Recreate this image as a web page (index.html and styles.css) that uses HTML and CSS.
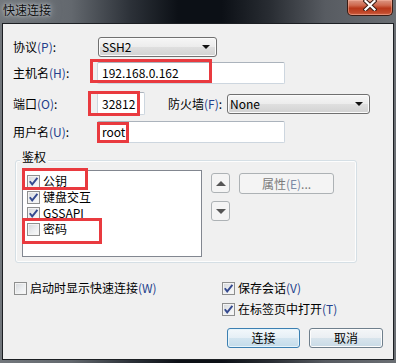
FILE: index.html
```html
<!DOCTYPE html>
<html>
<head>
<meta charset="utf-8">
<title>快速连接</title>
<link rel="stylesheet" href="styles.css">
</head>
<body>
<div class="window">
  <div class="titlebar">
    <span class="title">快速连接</span>
    <div class="close">
      <svg width="14" height="11" viewBox="0 0 14 11">
        <path d="M2.5 1 L11.5 9.5 M11.5 1 L2.5 9.5" stroke="#3b1d14" stroke-width="4.2" stroke-linecap="square"/>
        <path d="M2.5 1 L11.5 9.5 M11.5 1 L2.5 9.5" stroke="#ffffff" stroke-width="2.2" stroke-linecap="square"/>
      </svg>
    </div>
  </div>
  <div class="client">
    <div class="row r1">
      <span class="lbl">协议<span class="acc">(P)</span>:</span>
      <div class="combo proto"><span>SSH2</span><i class="arrow"></i></div>
    </div>
    <div class="row r2">
      <span class="lbl">主机名<span class="acc">(H)</span>:</span>
      <div class="edit host">192.168.0.162</div>
    </div>
    <div class="row r3">
      <span class="lbl">端口<span class="acc">(O)</span>:</span>
      <div class="edit port">32812</div>
      <span class="lbl2">防火墙<span class="acc">(F)</span>:</span>
      <div class="combo fw"><span>None</span><i class="arrow"></i></div>
    </div>
    <div class="row r4">
      <span class="lbl">用户名<span class="acc">(U)</span>:</span>
      <div class="edit user">root</div>
    </div>

    <div class="group">
      <span class="legend">鉴权</span>
      <div class="listbox">
        <div class="item"><span class="cb on"><svg width="11" height="11" viewBox="0 0 11 11"><path d="M1.8 5.2 L4.2 8.4 L9.4 1.8" fill="none" stroke="#34498f" stroke-width="1.9"/></svg></span><span>公钥</span></div>
        <div class="item"><span class="cb on"><svg width="11" height="11" viewBox="0 0 11 11"><path d="M1.8 5.2 L4.2 8.4 L9.4 1.8" fill="none" stroke="#34498f" stroke-width="1.9"/></svg></span><span>键盘交互</span></div>
        <div class="item"><span class="cb on"><svg width="11" height="11" viewBox="0 0 11 11"><path d="M1.8 5.2 L4.2 8.4 L9.4 1.8" fill="none" stroke="#34498f" stroke-width="1.9"/></svg></span><span class="latin">GSSAPI</span></div>
        <div class="item"><span class="cb"></span><span>密码</span></div>
      </div>
      <div class="sidebtns">
        <div class="btn dis sq"><i class="tri up"></i></div>
        <div class="btn dis sq"><i class="tri down"></i></div>
      </div>
      <div class="btn dis props">属性<span class="acc dim">(E)</span>...</div>
    </div>

    <div class="bottom">
      <div class="bleft">
        <div class="check"><span class="cb"></span><span>启动时显示快速连接<span class="acc">(W)</span></span></div>
      </div>
      <div class="bright">
        <div class="check"><span class="cb on"><svg width="11" height="11" viewBox="0 0 11 11"><path d="M1.8 5.2 L4.2 8.4 L9.4 1.8" fill="none" stroke="#34498f" stroke-width="1.9"/></svg></span><span>保存会话<span class="acc">(V)</span></span></div>
        <div class="check c2"><span class="cb on"><svg width="11" height="11" viewBox="0 0 11 11"><path d="M1.8 5.2 L4.2 8.4 L9.4 1.8" fill="none" stroke="#34498f" stroke-width="1.9"/></svg></span><span>在标签页中打开<span class="acc">(T)</span></span></div>
        <div class="btnrow">
          <div class="btn main">连接</div>
          <div class="btn cancel">取消</div>
        </div>
      </div>
    </div>
  </div>

  <div class="mark m-host"></div>
  <div class="mark m-port"></div>
  <div class="mark m-user"></div>
  <div class="mark m-pub"></div>
  <div class="mark m-pwd"></div>
</div>
</body>
</html>
```
FILE: styles.css
```css
* { box-sizing: border-box; }
html, body { margin: 0; padding: 0; }
body {
  width: 396px;
  height: 363px;
  overflow: hidden;
  font: 12px/16px "Noto Sans CJK SC", "Noto Sans", sans-serif;
  color: #000;
  background: #555;
}
.window {
  position: relative;
  width: 396px;
  height: 363px;
  display: flex;
  flex-direction: column;
  background: linear-gradient(90deg, #72777c 0%, #63686e 18%, #2c3138 33%, #0c1016 45%, #0c1016 56%, #282c32 68%, #575b61 82%, #6a6e73 100%);
}
.titlebar {
  height: 23px;
  display: flex;
  justify-content: space-between;
  align-items: flex-start;
  padding-left: 3px;
}
.title {
  margin-top: 2px;
  color: #0e0e0e;
  text-shadow: 0 0 3px rgba(220,225,230,.9), 0 0 7px rgba(190,195,200,.8), 0 0 12px rgba(170,175,180,.7);
}
.close {
  width: 46px;
  height: 16px;
  margin-right: 3px;
  border: 1px solid #3a1c14;
  border-top: none;
  border-radius: 0 0 5px 5px;
  background: linear-gradient(#dc9784 0%, #cf6a50 35%, #b8381a 55%, #c24a2c 85%, #d06a4c 100%);
  box-shadow: inset 0 0 0 1px rgba(255,190,170,.45);
  display: flex;
  justify-content: center;
  align-items: flex-start;
}
.client {
  flex: 1;
  margin: 0 2px 3px 2px;
  border: 1px solid #1c1f23;
  background: #f0f0f0;
  padding-top: 13px;
  display: flex;
  flex-direction: column;
  align-items: flex-start;
}
.row {
  display: flex;
  align-items: center;
  padding-left: 10px;
}
.r1 { height: 20px; }
.r2 { height: 22px; margin-top: 5px; }
.r3 { height: 23px; margin-top: 8px; }
.r4 { height: 22px; margin-top: 6px; }
.lbl { width: 84px; white-space: nowrap; }
.lbl2 { width: 59px; margin-left: 23px; white-space: nowrap; }
.acc { color: #243f8c; }
.acc.dim { color: #7d8aa6; }

.combo {
  height: 20px;
  display: flex;
  align-items: center;
  justify-content: space-between;
  padding: 0 6px 0 3px;
  border: 1px solid #707070;
  border-radius: 3px;
  background: linear-gradient(#f6f6f6 0%, #ececec 50%, #dfdfdf 51%, #d2d2d2 100%);
  box-shadow: inset 0 0 0 1px #fbfbfb;
  font-family: "Noto Sans CJK SC", sans-serif;
}
.combo.proto { width: 119px; margin-left: 1px; }
.combo.fw { width: 143px; padding-left: 2px; }
.arrow {
  width: 0;
  height: 0;
  border-left: 4px solid transparent;
  border-right: 4px solid transparent;
  border-top: 4px solid #111;
}
.edit {
  height: 100%;
  display: flex;
  align-items: center;
  padding-left: 4px;
  background: #fff;
  border: 1px solid #cdd6df;
  border-top-color: #abb3bc;
  border-radius: 2px;
}
.edit.host, .edit.user { width: 188px; }
.edit.port { width: 48px; }

.group {
  position: relative;
  margin: 17px 0 0 12px;
  width: 342px;
  height: 103px;
  border: 1px solid #d5dfe5;
  border-radius: 3px;
  box-shadow: inset 0 0 0 1px #fdfdfd;
  padding: 9px 0 0 6px;
  display: flex;
  align-items: flex-start;
}
.legend {
  position: absolute;
  top: -12px;
  left: 4px;
  padding: 0 2px;
  background: #f0f0f0;
}
.listbox {
  width: 180px;
  height: 87px;
  border: 1px solid #828790;
  background: #fff;
  padding: 2px 0 0 4px;
}
.item {
  height: 16px;
  display: flex;
  align-items: center;
  gap: 3px;
}
.cb {
  width: 13px;
  height: 13px;
  flex: none;
  border: 1px solid #8e8f8f;
  background: linear-gradient(135deg, #d3d6da 0%, #eceef0 55%, #fbfbfb 100%);
  box-shadow: inset 0 0 0 1px #f3f3f3;
  display: flex;
  align-items: center;
  justify-content: center;
}
.cb svg { display: block; }
.sidebtns {
  display: flex;
  flex-direction: column;
  gap: 8px;
  margin: 3px 0 0 9px;
}
.btn {
  display: flex;
  align-items: center;
  justify-content: center;
  border: 1px solid #707070;
  border-radius: 3px;
  background: linear-gradient(#f2f2f2 0%, #ebebeb 50%, #dddddd 51%, #cfcfcf 100%);
  box-shadow: inset 0 0 0 1px #fcfcfc;
}
.btn.dis {
  border-color: #adb2b5;
  background: #f4f4f4;
  box-shadow: none;
  color: #7a7a7a;
}
.btn.sq { width: 19px; height: 20px; }
.tri {
  width: 0;
  height: 0;
  border-left: 5px solid transparent;
  border-right: 5px solid transparent;
}
.tri.up { border-bottom: 5px solid #555; }
.tri.down { border-top: 5px solid #555; }
.btn.props {
  width: 95px;
  height: 21px;
  margin: 3px 0 0 9px;
}

.bottom {
  display: flex;
  margin-top: 17px;
}
.bleft { width: 208px; margin-left: 11px; }
.bright { display: flex; flex-direction: column; }
.check {
  height: 16px;
  display: flex;
  align-items: center;
  gap: 3px;
  white-space: nowrap;
}
.check.c2 { margin-top: 5px; }
.btnrow {
  display: flex;
  margin: 11px 0 0 5px;
  gap: 9px;
}
.btn.main, .btn.cancel { height: 20px; }
.btn.main {
  width: 73px;
  border-color: #3c7fb1;
  background: linear-gradient(#f3f8fb 0%, #e5eff6 50%, #d3e5f0 51%, #c3dbea 100%);
  box-shadow: inset 0 0 0 1px #e6f4fb;
}
.btn.cancel {
  width: 74px;
  border-color: #6f7f8c;
  background: linear-gradient(#f4f6f8 0%, #eaeef2 50%, #d8e4ec 51%, #c8dae6 100%);
}

.mark {
  position: absolute;
  border: 3px solid #e93a3f;
}
.m-host { left: 90px; top: 59px; width: 122px; height: 24px; }
.m-port { left: 88px; top: 91px; width: 52px; height: 25px; }
.m-user { left: 97px; top: 122px; width: 32px; height: 21px; }
.m-pub  { left: 22px; top: 168px; width: 66px; height: 22px; }
.m-pwd  { left: 22px; top: 218px; width: 80px; height: 26px; }
```
